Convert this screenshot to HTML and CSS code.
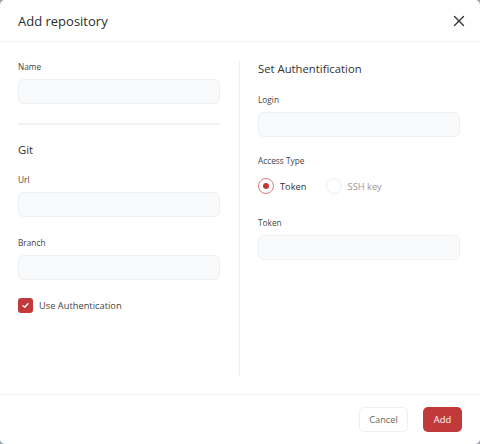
FILE: index.html
```html
<!DOCTYPE html>
<html lang="en">
<head>
<meta charset="utf-8">
<title>Add repository</title>
<link rel="stylesheet" href="styles.css">
</head>
<body>
<div class="modal">
  <header class="modal-header">
    <h1 class="modal-title">Add repository</h1>
    <button class="close" aria-label="Close">
      <svg width="12" height="12" viewBox="0 0 12 12"><path d="M1.5 1.5 L10.5 10.5 M10.5 1.5 L1.5 10.5" stroke="#333" stroke-width="1.4" stroke-linecap="round" fill="none"/></svg>
    </button>
  </header>
  <main class="modal-body">
    <section class="col col-left">
      <div class="field first">
        <label class="label">Name</label>
        <div class="input"></div>
      </div>
      <hr class="sep">
      <h2 class="section-title git">Git</h2>
      <div class="field">
        <label class="label">Url</label>
        <div class="input"></div>
      </div>
      <div class="field spaced">
        <label class="label">Branch</label>
        <div class="input"></div>
      </div>
      <div class="check">
        <span class="checkbox">
          <svg width="9" height="9" viewBox="0 0 9 9"><path d="M2 4.7 L3.7 6.3 L7 2.8" stroke="#fff" stroke-width="1.3" fill="none" stroke-linecap="round" stroke-linejoin="round"/></svg>
        </span>
        <span class="check-text">Use Authentication</span>
      </div>
    </section>
    <div class="vdiv"></div>
    <section class="col col-right">
      <h2 class="section-title auth">Set Authentification</h2>
      <div class="field">
        <label class="label">Login</label>
        <div class="input"></div>
      </div>
      <div class="field access">
        <label class="label">Access Type</label>
        <div class="radios">
          <span class="radio-item"><span class="radio on"></span><span class="radio-text">Token</span></span>
          <span class="radio-item"><span class="radio"></span><span class="radio-text off">SSH key</span></span>
        </div>
      </div>
      <div class="field token">
        <label class="label">Token</label>
        <div class="input"></div>
      </div>
    </section>
  </main>
  <footer class="modal-footer">
    <button class="btn btn-cancel">Cancel</button>
    <button class="btn btn-add">Add</button>
  </footer>
</div>
</body>
</html>
```
FILE: styles.css
```css
html, body {
  margin: 0;
  padding: 0;
  width: 480px;
  height: 444px;
  background: #9ca3ad;
  overflow: hidden;
}
.modal {
  width: 480px;
  height: 444px;
  background: #fff;
  border-radius: 5px;
  display: flex;
  flex-direction: column;
  font-family: "Open Sans", "Noto Sans", sans-serif;
  color: #333;
}
.modal-header {
  height: 41px;
  flex: none;
  border-bottom: 1px solid #f1f2f4;
  display: flex;
  align-items: center;
  justify-content: space-between;
  padding: 0 15px 0 18px;
}
.modal-title {
  margin: 0;
  font-size: 13px;
  font-weight: 400;
  color: #2d2d2d;
}
.close {
  border: 0;
  background: none;
  padding: 0;
  width: 12px;
  height: 12px;
  display: flex;
}
.modal-body {
  flex: 1;
  display: grid;
  grid-template-columns: 202px 19px 1px 18px 202px;
  padding: 18px 18px 18px 18px;
}
.col {
  display: flex;
  flex-direction: column;
}
.col-left { grid-column: 1; }
.vdiv {
  grid-column: 3;
  background: #eef0f2;
}
.col-right { grid-column: 5; }
.field {
  display: flex;
  flex-direction: column;
}
.field.first { margin-top: 1px; }
.label {
  font-size: 8.3px;
  color: #444;
  line-height: 12px;
  margin-bottom: 6px;
}
.input {
  height: 23px;
  border: 1px solid #eef0f2;
  background: #f9fafb;
  border-radius: 6px;
}
.sep {
  margin: 19px 0 0;
  border: 0;
  height: 2px;
  background: #f1f2f4;
}
.section-title {
  margin: 0;
  font-weight: 400;
  font-size: 11.3px;
  color: #333;
  line-height: 16px;
}
.git { margin-top: 17px; margin-bottom: 16px; }
.field.spaced { margin-top: 20px; }
.auth { margin-top: 1px; margin-bottom: 17px; }
.field.access { margin-top: 18px; }
.field.token { margin-top: 23px; }
.check {
  display: flex;
  align-items: center;
  gap: 6px;
  margin-top: 18px;
}
.checkbox {
  width: 15px;
  height: 15px;
  border-radius: 3px;
  background: #c2393c;
  display: flex;
  align-items: center;
  justify-content: center;
}
.check-text {
  font-size: 9.3px;
  color: #444;
}
.radios {
  display: flex;
  align-items: center;
  gap: 19px;
  margin-top: 5px;
}
.radio-item {
  display: flex;
  align-items: center;
  gap: 6px;
}
.radio {
  width: 16px;
  height: 16px;
  box-sizing: border-box;
  border: 1px solid #eeeff1;
  border-radius: 50%;
  display: flex;
  align-items: center;
  justify-content: center;
}
.radio.on {
  border: 1.5px solid #d9797b;
}
.radio.on::after {
  content: "";
  width: 6px;
  height: 6px;
  border-radius: 50%;
  background: #c2393c;
}
.radio-text {
  font-size: 9.3px;
  color: #333;
}
.radio-text.off { color: #999; }
.modal-footer {
  height: 49px;
  flex: none;
  border-top: 1px solid #f1f2f4;
  display: flex;
  justify-content: flex-end;
  align-items: center;
  gap: 15px;
  padding: 0 18px;
}
.btn {
  height: 25px;
  border-radius: 5px;
  font-family: "Open Sans", "Noto Sans", sans-serif;
  font-size: 9.3px;
  padding: 0;
}
.btn-cancel {
  width: 49px;
  background: #fff;
  border: 1px solid #eef0f2;
  color: #666;
}
.btn-add {
  width: 39px;
  background: #c2393c;
  border: 0;
  color: #fff;
}
```
